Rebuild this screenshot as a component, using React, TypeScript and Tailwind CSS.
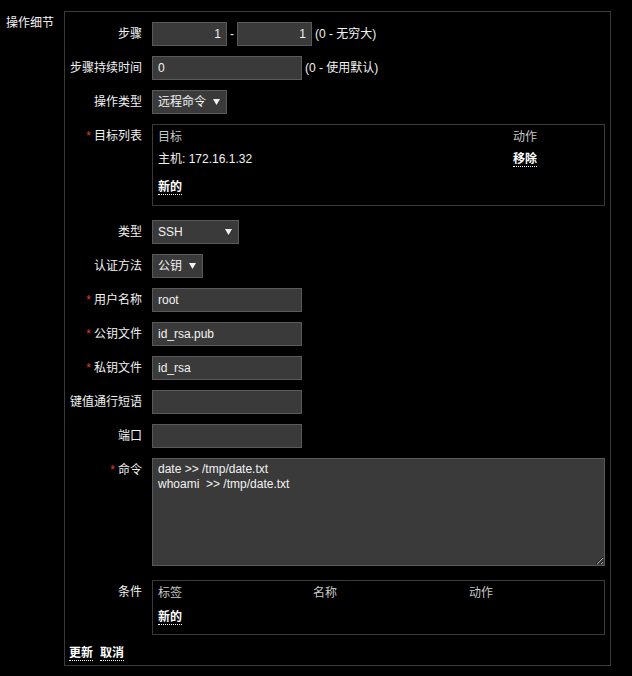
import type { ReactNode } from 'react'

const FONT = "font-['Liberation_Sans','Noto_Sans_CJK_SC',sans-serif]"

function Label({ children, required }: { children: ReactNode; required?: boolean }) {
  return (
    <div className="w-[77px] shrink-0 text-right leading-[24px] whitespace-nowrap">
      {required && <span className="text-[#e53935] mr-[3px]">*</span>}
      {children}
    </div>
  )
}

function Row({ label, required, children, className = '' }: { label: string; required?: boolean; children: ReactNode; className?: string }) {
  return (
    <div className={`flex gap-[10px] ${className}`}>
      <Label required={required}>{label}</Label>
      <div className="flex-1 flex items-start">{children}</div>
    </div>
  )
}

function Field({ value = '', width, right }: { value?: string; width: string; right?: boolean }) {
  return (
    <input
      readOnly
      value={value}
      className={`${width} h-[24px] bg-[#3a3a3a] border border-[#595959] px-[5px] text-[#f2f2f2] outline-none ${right ? 'text-right' : ''}`}
    />
  )
}

function Select({ value, width }: { value: string; width: string }) {
  return (
    <div className={`${width} h-[24px] bg-[#3a3a3a] border border-[#595959] pl-[5px] pr-[6px] flex items-center justify-between`}>
      <span>{value}</span>
      <svg width="7" height="6" viewBox="0 0 7 6" aria-hidden="true">
        <path d="M0 0h7L3.5 6z" fill="#f2f2f2" />
      </svg>
    </div>
  )
}

function LinkText({ children }: { children: ReactNode }) {
  return (
    <span className="font-bold text-white border-b border-dotted border-white leading-[13px] inline-block">
      {children}
    </span>
  )
}

export default function App() {
  return (
    <div className={`min-h-[676px] w-[632px] bg-black text-[#f2f2f2] text-[12px] ${FONT} flex pt-[11px]`}>
      <div className="w-[64px] pl-[6px] pt-[5px] leading-[14px] shrink-0">操作细节</div>

      <div className="w-[547px] h-[655px] border border-[#3a3a3a] pt-[10px] pr-[5px] flex flex-col">
        <div className="flex flex-col gap-[10px]">
          <Row label="步骤">
            <div className="flex items-center gap-[3px]">
              <Field value="1" width="w-[75px]" right />
              <span>-</span>
              <Field value="1" width="w-[75px]" right />
              <span>(0 - 无穷大)</span>
            </div>
          </Row>

          <Row label="步骤持续时间">
            <div className="flex items-center gap-[3px]">
              <Field value="0" width="w-[150px]" />
              <span>(0 - 使用默认)</span>
            </div>
          </Row>

          <Row label="操作类型">
            <Select value="远程命令" width="w-[75px]" />
          </Row>

          <Row label="目标列表" required className="mb-[4px]">
            <div className="w-full h-[82px] border border-[#3a3a3a] px-[5px] pt-[5px]">
              <div className="grid grid-cols-[355px_1fr] text-[#c9c9c9] leading-[14px]">
                <span>目标</span>
                <span>动作</span>
              </div>
              <div className="grid grid-cols-[355px_1fr] leading-[14px] mt-[8px]">
                <span>主机: 172.16.1.32</span>
                <span><LinkText>移除</LinkText></span>
              </div>
              <div className="mt-[11px]">
                <LinkText>新的</LinkText>
              </div>
            </div>
          </Row>

          <Row label="类型">
            <Select value="SSH" width="w-[87px]" />
          </Row>

          <Row label="认证方法">
            <Select value="公钥" width="w-[51px]" />
          </Row>

          <Row label="用户名称" required>
            <Field value="root" width="w-[150px]" />
          </Row>

          <Row label="公钥文件" required>
            <Field value="id_rsa.pub" width="w-[150px]" />
          </Row>

          <Row label="私钥文件" required>
            <Field value="id_rsa" width="w-[150px]" />
          </Row>

          <Row label="键值通行短语">
            <Field width="w-[150px]" />
          </Row>

          <Row label="端口">
            <Field width="w-[150px]" />
          </Row>

          <Row label="命令" required className="mb-[4px]">
            <textarea
              readOnly
              value={'date >> /tmp/date.txt\nwhoami  >> /tmp/date.txt'}
              className="w-full h-[108px] bg-[#3a3a3a] border border-[#595959] px-[5px] pt-[3px] leading-[15px] text-[#f2f2f2] outline-none block"
            />
          </Row>

          <Row label="条件">
            <div className="w-full h-[55px] border border-[#3a3a3a] px-[5px] pt-[5px]">
              <div className="grid grid-cols-[155px_156px_1fr] text-[#c9c9c9] leading-[14px]">
                <span>标签</span>
                <span>名称</span>
                <span>动作</span>
              </div>
              <div className="mt-[8px]">
                <LinkText>新的</LinkText>
              </div>
            </div>
          </Row>
        </div>

        <div className="flex gap-[7px] pl-[4px] mt-[12px]">
          <LinkText>更新</LinkText>
          <LinkText>取消</LinkText>
        </div>
      </div>
    </div>
  )
}
